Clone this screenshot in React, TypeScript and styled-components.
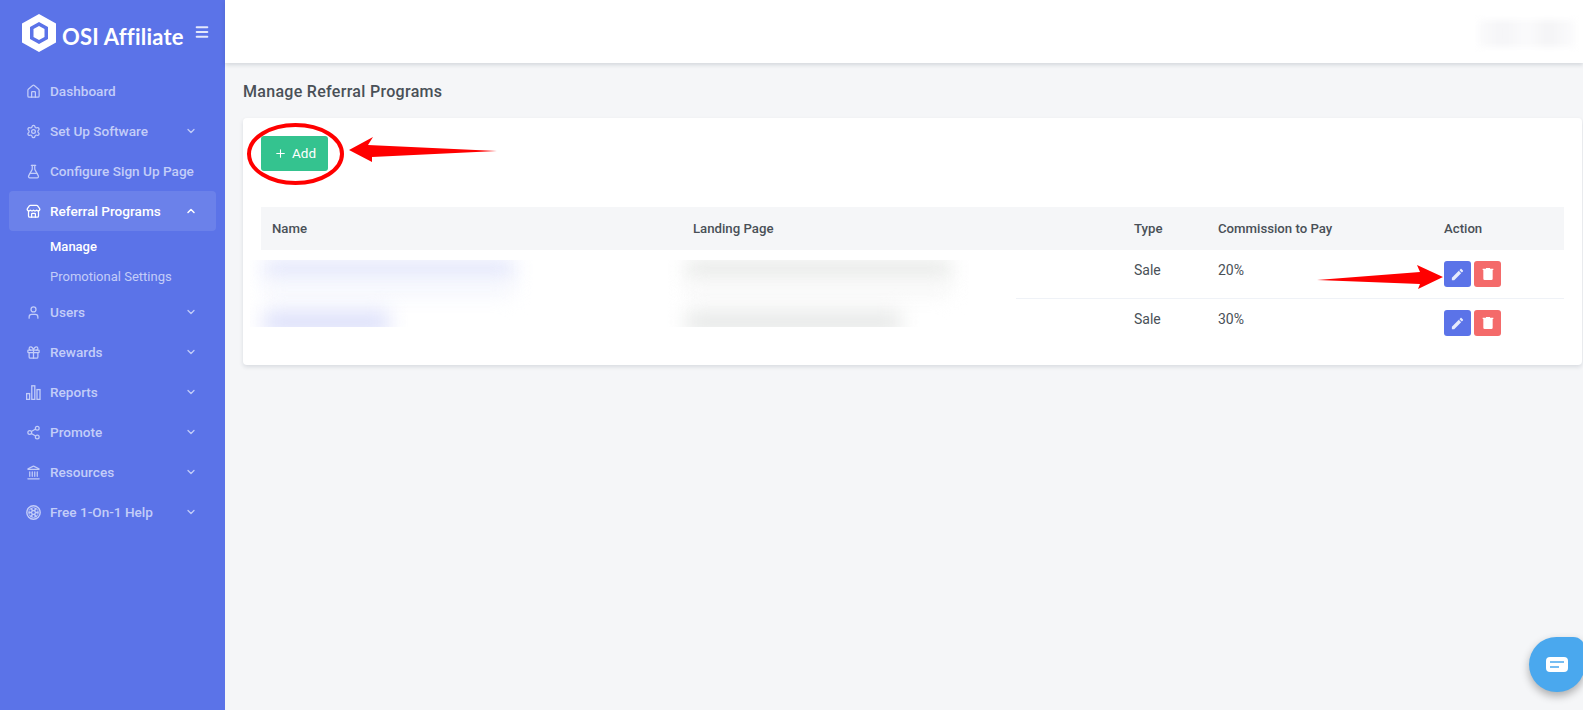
import React from "react";
import styled, { createGlobalStyle } from "styled-components";
import {
  House,
  Settings,
  FlaskConical,
  Store,
  User,
  Gift,
  Share2,
  Landmark,
  ChevronDown,
  ChevronUp,
  Menu,
  Plus,
} from "lucide-react";

const Global = createGlobalStyle`
  html, body { margin: 0; padding: 0; height: 100%; overflow: hidden; }
  body { font-family: "Roboto", "Liberation Sans", sans-serif; background: #f5f6f8; color: #495057; }
  * { box-sizing: border-box; }
`;

const Page = styled.div`
  position: relative;
  display: flex;
  width: 1583px;
  height: 710px;
  overflow: hidden;
`;

const Sidebar = styled.aside`
  flex: 0 0 225px;
  width: 225px;
  min-width: 0;
  background: #5b73e8;
`;

const Brand = styled.div`
  height: 71px;
  padding: 14px 0 0 22px;
  display: flex;
  align-items: flex-start;
  color: #fff;
`;

const BrandName = styled.span`
  margin: 8px 0 0 6px;
  width: 122px;
  font-family: "Lato", sans-serif;
  font-size: 22px;
  line-height: 30px;
  font-weight: 700;
  letter-spacing: 0.2px;
  white-space: nowrap;
`;

const Burger = styled.span`
  margin: 10px 0 0 10px;
  display: flex;
  color: #e4e8fb;
`;

const Nav = styled.nav`
  display: flex;
  flex-direction: column;
`;

const Item = styled.div<{ $active?: boolean }>`
  height: 40px;
  margin: 0 9px;
  padding: 0 19px 0 17px;
  display: flex;
  align-items: center;
  border-radius: 4px;
  font-size: 13.6px;
  font-weight: 500;
  color: ${(p) => (p.$active ? "#ffffff" : "#c3cdf8")};
  background: ${(p) => (p.$active ? "rgba(255,255,255,0.1)" : "transparent")};
`;

const ItemIcon = styled.span`
  flex: 0 0 24px;
  display: flex;
`;

const ItemLabel = styled.span`
  flex: 1;
  padding-bottom: 1px;
  white-space: nowrap;
`;

const Sub = styled.div`
  height: 61px;
  display: flex;
  flex-direction: column;
`;

const SubItem = styled.div<{ $active?: boolean }>`
  height: 30.5px;
  padding-left: 50px;
  display: flex;
  align-items: center;
  font-size: 13px;
  font-weight: ${(p) => (p.$active ? 500 : 400)};
  color: ${(p) => (p.$active ? "#ffffff" : "#c3cdf8")};
`;

const Main = styled.main`
  flex: 1;
  min-width: 0;
  display: flex;
  flex-direction: column;
`;

const Header = styled.header`
  height: 63px;
  background: #fff;
  box-shadow: 0 2px 4px rgba(15, 34, 58, 0.14);
`;

const Content = styled.div`
  padding: 0 1px 0 18px;
`;

const Title = styled.h1`
  margin: 0;
  height: 55px;
  display: flex;
  align-items: center;
  padding-top: 1px;
  font-size: 16px;
  font-weight: 500;
  color: #495057;
  letter-spacing: 0.3px;
`;

const Card = styled.section`
  background: #fff;
  border-radius: 4px;
  padding: 18px 18px 18px;
  box-shadow: 0 2px 4px rgba(15, 34, 58, 0.12);
`;

const AddButton = styled.button`
  display: flex;
  align-items: center;
  gap: 5px;
  width: 67px;
  height: 35px;
  padding: 0 0 1px 13px;
  border: 0;
  border-radius: 3px;
  background: #34c38f;
  color: #fff;
  font: 400 13.5px "Roboto", sans-serif;
`;

const Table = styled.table`
  width: 100%;
  margin-top: 36px;
  border-collapse: collapse;
  table-layout: fixed;
  font-size: 14px;
`;

const Th = styled.th<{ $w: number }>`
  width: ${(p) => p.$w}px;
  height: 43px;
  padding: 0 11px;
  background: #f5f6f8;
  text-align: left;
  font-size: 13.2px;
  font-weight: 500;
  color: #495057;
`;

const Row = styled.tr<{ $last?: boolean }>`
  border-bottom: ${(p) => (p.$last ? "0" : "1px solid #eff2f7")};
`;

const Td = styled.td`
  padding: 10px 11px 12px;
  line-height: 20px;
  vertical-align: top;
  color: #495057;
`;

const ActionCell = styled(Td)`
  padding: 11px;
`;

const Actions = styled.div`
  display: flex;
  gap: 3px;
`;

const IconButton = styled.button<{ $bg: string }>`
  width: 27px;
  height: 26px;
  padding: 0;
  border: 0;
  border-radius: 3px;
  display: flex;
  align-items: center;
  justify-content: center;
  color: #fff;
  background: ${(p) => p.$bg};
`;

/* Privacy smudges that lie over the table in the reference */
const Redaction = styled.div`
  position: absolute;
  left: 250px;
  top: 260px;
  width: 766px;
  height: 67px;
  background: #fff;
  overflow: hidden;
`;

const Smudge = styled.div<{ $x: number; $y: number; $w: number; $h: number; $c: string }>`
  position: absolute;
  left: ${(p) => p.$x}px;
  top: ${(p) => p.$y}px;
  width: ${(p) => p.$w}px;
  height: ${(p) => p.$h}px;
  background: ${(p) => p.$c};
  filter: blur(10px);
`;

const TopSmudge = styled.div`
  position: absolute;
  left: 1478px;
  top: 20px;
  width: 98px;
  height: 27px;
  background: linear-gradient(90deg, #fbfbfc 0%, #f5f5f7 25%, #fbfbfc 50%, #f4f4f6 72%, #fcfcfd 100%);
  filter: blur(3px);
`;

const Annotation = styled.svg`
  position: absolute;
  inset: 0;
  width: 1583px;
  height: 710px;
  pointer-events: none;
`;

const ChatBubble = styled.div`
  position: absolute;
  left: 1529px;
  top: 637px;
  width: 56px;
  height: 55px;
  border-radius: 28px 12px 28px 28px;
  background: #4aa8ee;
  box-shadow: 0 4px 8px rgba(0, 0, 0, 0.3);
  display: flex;
  align-items: center;
  justify-content: center;
`;

const BarsIcon = () => (
  <svg width="15" height="15" viewBox="0 0 15 15" fill="none" stroke="currentColor" strokeWidth="1.3">
    <rect x="0.6" y="8.6" width="3" height="5.8" />
    <rect x="5.8" y="0.8" width="3" height="13.6" />
    <rect x="11" y="4.6" width="3" height="9.8" />
  </svg>
);

const WheelIcon = () => (
  <svg width="15" height="15" viewBox="0 0 15 15">
    <circle cx="7.5" cy="7.5" r="6.7" fill="none" stroke="currentColor" strokeWidth="1.4" />
    <circle cx="7.5" cy="7.5" r="5.2" fill="currentColor" />
    <g fill="#5b73e8">
      <circle cx="7.5" cy="7.5" r="1.2" />
      <circle cx="7.5" cy="3.9" r="1.1" />
      <circle cx="7.5" cy="11.1" r="1.1" />
      <circle cx="4.4" cy="5.7" r="1.1" />
      <circle cx="10.6" cy="5.7" r="1.1" />
      <circle cx="4.4" cy="9.3" r="1.1" />
      <circle cx="10.6" cy="9.3" r="1.1" />
    </g>
  </svg>
);

const PencilIcon = () => (
  <svg width="15" height="15" viewBox="0 0 24 24" fill="#e6eafc">
    <path d="M20.71,7.04C21.1,6.65 21.1,6 20.71,5.63L18.37,3.29C18,2.9 17.35,2.9 16.96,3.29L15.12,5.12L18.87,8.87M3,17.25V21H6.75L17.81,9.93L14.06,6.18L3,17.25Z" />
  </svg>
);

const TrashIcon = () => (
  <svg width="16" height="16" viewBox="0 0 24 24" fill="#fff">
    <path d="M9,3V4H4V6H5V19A2,2 0 0,0 7,21H17A2,2 0 0,0 19,19V6H20V4H15V3H9Z" />
  </svg>
);

const icon = { size: 15, strokeWidth: 2 };

const Chevron = ({ up }: { up?: boolean }) =>
  up ? <ChevronUp size={12} strokeWidth={3} /> : <ChevronDown size={12} strokeWidth={2.5} />;

const NavRow = ({
  i,
  label,
  arrow,
  up,
  active,
}: {
  i: React.ReactNode;
  label: string;
  arrow?: boolean;
  up?: boolean;
  active?: boolean;
}) => (
  <Item $active={active}>
    <ItemIcon>{i}</ItemIcon>
    <ItemLabel>{label}</ItemLabel>
    {arrow && <Chevron up={up} />}
  </Item>
);

export default function App() {
  return (
    <Page>
      <Global />
      <Sidebar>
        <Brand>
          <svg width="34" height="38" viewBox="0 0 34 38">
            <path
              fillRule="evenodd"
              fill="#fff"
              d="M17 0 L34 9.5 V28.5 L17 38 L0 28.5 V9.5 Z M17 8 L8 13 V25 L17 30 L26 25 V13 Z"
            />
            <path d="M17 12 L22.5 15 V23 L17 26 L11.5 23 V15 Z" fill="#fff" />
          </svg>
          <BrandName>OSI Affiliate</BrandName>
          <Burger>
            <Menu size={16} strokeWidth={3} />
          </Burger>
        </Brand>
        <Nav>
          <NavRow i={<House {...icon} />} label="Dashboard" />
          <NavRow i={<Settings {...icon} />} label="Set Up Software" arrow />
          <NavRow i={<FlaskConical {...icon} />} label="Configure Sign Up Page" />
          <NavRow i={<Store {...icon} />} label="Referral Programs" arrow up active />
          <Sub>
            <SubItem $active>Manage</SubItem>
            <SubItem>Promotional Settings</SubItem>
          </Sub>
          <NavRow i={<User {...icon} />} label="Users" arrow />
          <NavRow i={<Gift {...icon} />} label="Rewards" arrow />
          <NavRow i={<BarsIcon />} label="Reports" arrow />
          <NavRow i={<Share2 {...icon} />} label="Promote" arrow />
          <NavRow i={<Landmark {...icon} />} label="Resources" arrow />
          <NavRow i={<WheelIcon />} label="Free 1-On-1 Help" arrow />
        </Nav>
      </Sidebar>
      <Main>
        <Header />
        <Content>
          <Title>Manage Referral Programs</Title>
          <Card>
            <AddButton>
              <Plus size={13} strokeWidth={2} />
              Add
            </AddButton>
            <Table>
              <thead>
                <tr>
                  <Th $w={421}>Name</Th>
                  <Th $w={441}>Landing Page</Th>
                  <Th $w={84}>Type</Th>
                  <Th $w={226}>Commission to Pay</Th>
                  <Th $w={131}>Action</Th>
                </tr>
              </thead>
              <tbody>
                {["20%", "30%"].map((pct, idx) => (
                  <Row key={pct} $last={idx === 1}>
                    <Td />
                    <Td />
                    <Td>Sale</Td>
                    <Td>{pct}</Td>
                    <ActionCell>
                      <Actions>
                        <IconButton $bg="#5b73e8">
                          <PencilIcon />
                        </IconButton>
                        <IconButton $bg="#f46a6a">
                          <TrashIcon />
                        </IconButton>
                      </Actions>
                    </ActionCell>
                  </Row>
                ))}
              </tbody>
            </Table>
          </Card>
        </Content>
      </Main>

      <TopSmudge />
      <Redaction>
        <Smudge $x={14} $y={0} $w={250} $h={18} $c="#e0e4fb" />
        <Smudge $x={14} $y={24} $w={250} $h={12} $c="#f3f5fd" />
        <Smudge $x={14} $y={52} $w={125} $h={20} $c="#d8dcfa" />
        <Smudge $x={436} $y={0} $w={265} $h={18} $c="#e6e8e6" />
        <Smudge $x={436} $y={24} $w={265} $h={12} $c="#f6f6f6" />
        <Smudge $x={436} $y={52} $w={215} $h={20} $c="#e4e6e5" />
      </Redaction>

      <Annotation viewBox="0 0 1583 710">
        <ellipse cx="295.5" cy="154" rx="46.5" ry="29" fill="none" stroke="#f00" strokeWidth="4" />
        <path d="M349 150 L373 137 L368 145 L497 151 L372 157 L372 162 Z" fill="#f00" />
        <path d="M1443 277 L1417 265 L1420 272 L1317 280 L1420 284 L1418 289 Z" fill="#f00" />
      </Annotation>

      <ChatBubble>
        <svg width="22" height="16" viewBox="0 0 22 16">
          <rect width="22" height="15" rx="4" fill="#fff" />
          <path d="M4 5h14M4 10h9" stroke="#4aa8ee" strokeWidth="1.4" />
        </svg>
      </ChatBubble>
    </Page>
  );
}
